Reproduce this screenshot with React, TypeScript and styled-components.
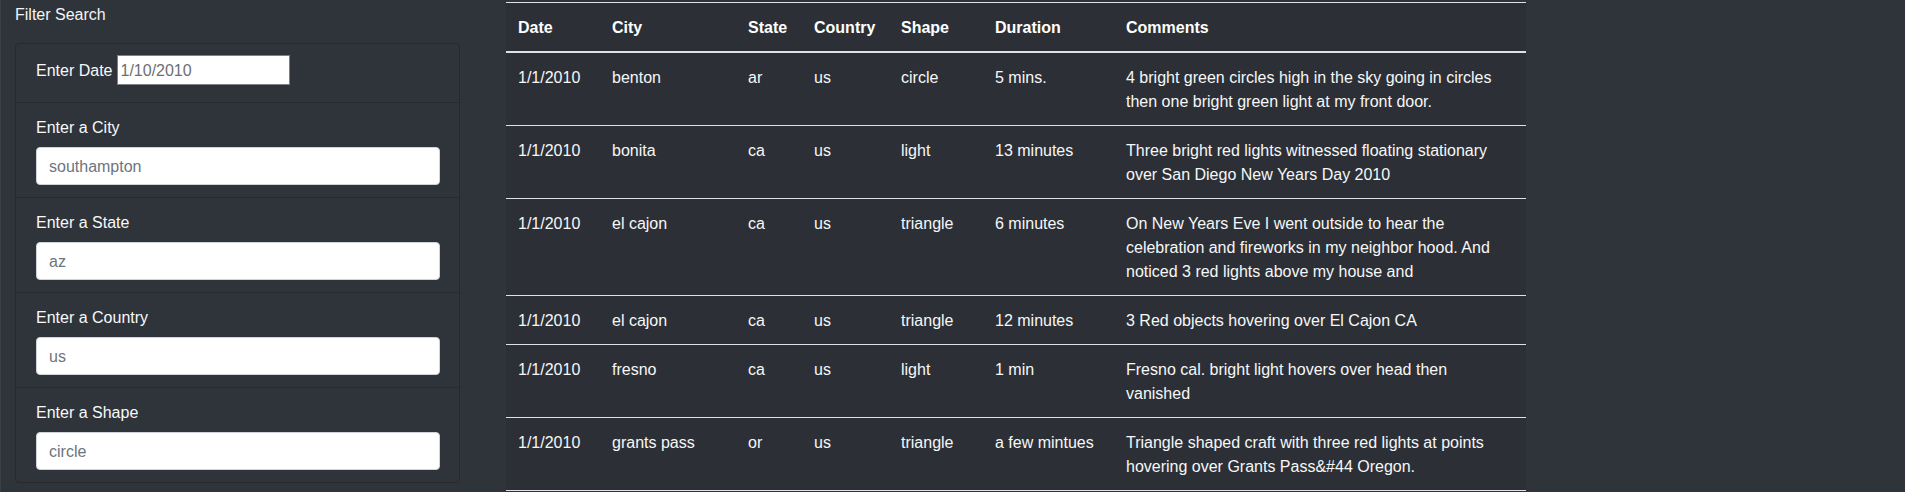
import React from "react";
import styled, { createGlobalStyle } from "styled-components";

const GlobalStyle = createGlobalStyle`
  html, body {
    margin: 0;
    padding: 0;
    background: #2f333a;
    color: #ffffff;
    font-family: "Liberation Sans", Arial, sans-serif;
    font-size: 16px;
    line-height: 24px;
  }
  * { box-sizing: border-box; }
`;

const Page = styled.div`
  display: flex;
  align-items: flex-start;
  min-height: 492px;
  border-left: 1px solid #3a3e45;
`;

const Sidebar = styled.aside`
  width: 459px;
  flex: none;
  padding: 3px 0 0 14px;
`;

const Title = styled.div`
  line-height: 24px;
  margin-bottom: 16px;
  color: #f4f5f6;
`;

const Card = styled.ul`
  list-style: none;
  margin: 0;
  padding: 0;
  width: 445px;
  border: 1px solid #262a2f;
  border-radius: 4px;
`;

const Item = styled.li<{ $inline?: boolean }>`
  padding: ${(p) => (p.$inline ? "11px 20px 17px" : "12px 20px")};
  display: flex;
  flex-direction: ${(p) => (p.$inline ? "row" : "column")};
  align-items: ${(p) => (p.$inline ? "center" : "stretch")};
  gap: ${(p) => (p.$inline ? "5px" : "8px")};
  & + & {
    border-top: 1px solid #262a2f;
  }
`;

const Label = styled.label`
  line-height: 24px;
  padding-top: 1px;
  margin-bottom: -1px;
  color: #f8f9fa;
`;

const DateInput = styled.input`
  width: 173px;
  height: 30px;
  border: 1px solid #7d7f84;
  border-radius: 0;
  padding: 1px 2px 0;
  font: inherit;
  background: #fff;
  color: #6c6f73;
  &::placeholder { color: #6c6f73; }
`;

const TextInput = styled.input`
  width: 404px;
  height: 38px;
  border: 1px solid #ced4da;
  border-radius: 4px;
  padding: 7px 12px 5px;
  font: inherit;
  background: #fff;
  color: #6c757d;
  &::placeholder { color: #6c757d; }
`;

const Main = styled.main`
  margin-left: 46px;
  padding-top: 2px;
`;

const Table = styled.table`
  width: 1020px;
  border-collapse: collapse;
  table-layout: fixed;
  background: #2c3036;
  color: #ffffff;
`;

const Th = styled.th<{ $w: number }>`
  width: ${(p) => p.$w}px;
  text-align: left;
  font-weight: 700;
  padding: 13px 12px 11px;
  vertical-align: top;
  border-top: 1px solid #dee2e6;
  border-bottom: 2px solid #dee2e6;
`;

const Row = styled.tr`
  &:last-child td { border-bottom: 1px solid #dee2e6; }
`;

const Td = styled.td`
  padding: 13px 12px 11px;
  vertical-align: top;
  border-top: 1px solid #dee2e6;
  color: #f6f7f8;
`;

const columns: [string, number][] = [
  ["Date", 94],
  ["City", 136],
  ["State", 66],
  ["Country", 87],
  ["Shape", 94],
  ["Duration", 131],
  ["Comments", 412],
];

const rows = [
  ["1/1/2010", "benton", "ar", "us", "circle", "5 mins.", "4 bright green circles high in the sky going in circles then one bright green light at my front door."],
  ["1/1/2010", "bonita", "ca", "us", "light", "13 minutes", "Three bright red lights witnessed floating stationary over San Diego New Years Day 2010"],
  ["1/1/2010", "el cajon", "ca", "us", "triangle", "6 minutes", "On New Years Eve I went outside to hear the celebration and fireworks in my neighbor hood. And noticed 3 red lights above my house and"],
  ["1/1/2010", "el cajon", "ca", "us", "triangle", "12 minutes", "3 Red objects hovering over El Cajon CA"],
  ["1/1/2010", "fresno", "ca", "us", "light", "1 min", "Fresno cal. bright light hovers over head then vanished"],
  ["1/1/2010", "grants pass", "or", "us", "triangle", "a few mintues", "Triangle shaped craft with three red lights at points hovering over Grants Pass&#44 Oregon."],
];

export default function App() {
  return (
    <>
      <GlobalStyle />
      <Page>
        <Sidebar>
          <Title>Filter Search</Title>
          <Card>
            <Item $inline>
              <Label htmlFor="datetime">Enter Date</Label>
              <DateInput id="datetime" type="text" placeholder="1/10/2010" />
            </Item>
            <Item>
              <Label htmlFor="city">Enter a City</Label>
              <TextInput id="city" type="text" placeholder="southampton" />
            </Item>
            <Item>
              <Label htmlFor="state">Enter a State</Label>
              <TextInput id="state" type="text" placeholder="az" />
            </Item>
            <Item>
              <Label htmlFor="country">Enter a Country</Label>
              <TextInput id="country" type="text" placeholder="us" />
            </Item>
            <Item>
              <Label htmlFor="shape">Enter a Shape</Label>
              <TextInput id="shape" type="text" placeholder="circle" />
            </Item>
          </Card>
        </Sidebar>
        <Main>
          <Table>
            <thead>
              <tr>
                {columns.map(([name, w]) => (
                  <Th key={name} $w={w}>
                    {name}
                  </Th>
                ))}
              </tr>
            </thead>
            <tbody>
              {rows.map((r, i) => (
                <Row key={i}>
                  {r.map((c, j) => (
                    <Td key={j}>{c}</Td>
                  ))}
                </Row>
              ))}
            </tbody>
          </Table>
        </Main>
      </Page>
    </>
  );
}
